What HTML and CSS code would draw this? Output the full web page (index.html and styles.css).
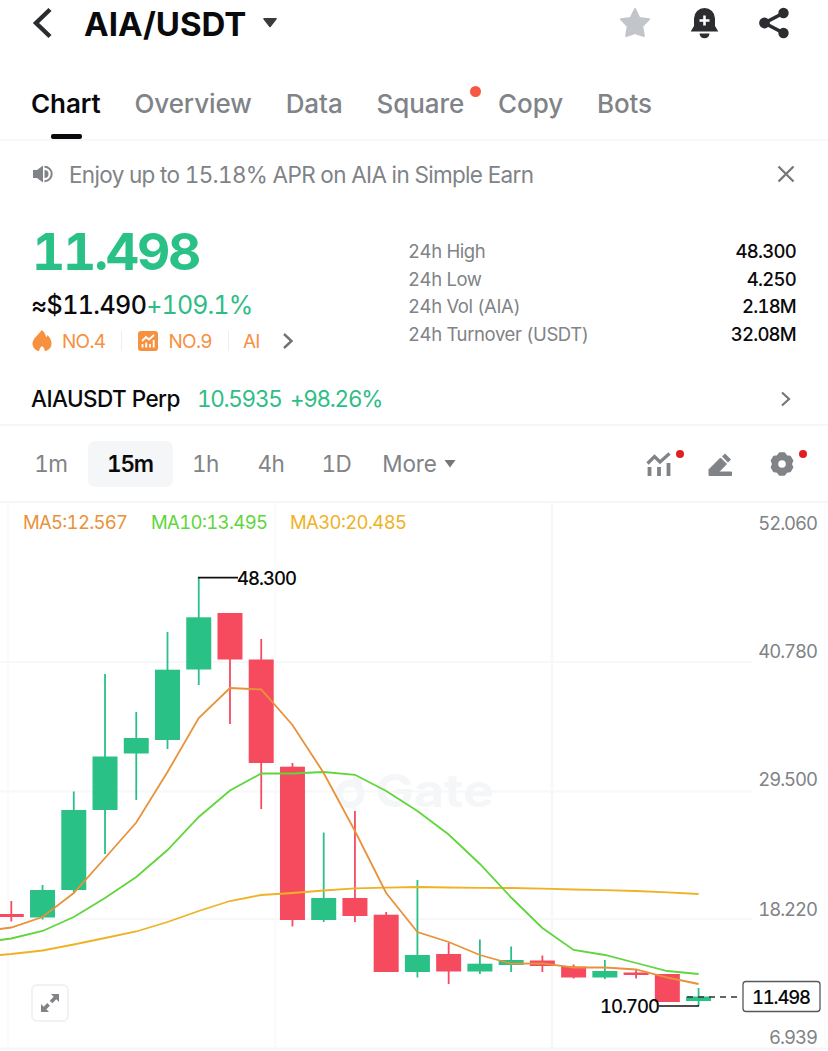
FILE: index.html
```
<!DOCTYPE html>
<html lang="en">
<head>
    <meta charset="UTF-8">
    <meta name="viewport" content="width=device-width, initial-scale=1.0">
    <title>AIA/USDT</title>
    <link rel="stylesheet" href="styles.css">
</head>
<body>
    <header class="topbar">
        <svg class="back" width="22" height="32" viewBox="0 0 22 32"><path d="M20 2.500 6 16l14 13.500" fill="none" stroke="#2b2c30" stroke-width="4.400"/></svg>
        <h1 class="pair"><span>AIA/USDT</span></h1>
        <svg class="pair-arrow" width="16" height="12" viewBox="0 0 16 12"><path d="M2 1.800h12L8 9.400z" fill="#3a3b3e" stroke="#3a3b3e" stroke-width="1.600" stroke-linejoin="round"/></svg>
        <div class="actions">
            <svg width="34" height="34" viewBox="0 0 34 34"><path d="m18 3 4.300 9 9.700 1.200-6.800 7 1.700 9.800-8.900-3-8.900 3 1.700-9.800-6.800-7L13.700 12z" fill="#c2c5c9" stroke="#c2c5c9" stroke-width="2" stroke-linejoin="round"/></svg>
            <svg width="34" height="34" viewBox="0 0 34 34"><path d="M7 20V12.500a10.500 10.500 0 0 1 21 0V20l3.300 5.500H3.700z" fill="#2b2d31"/><path d="M12.500 27.500h10a5 4.800 0 0 1-10 0z" fill="#2b2d31"/><path d="M17.500 9.500v10M12.500 14.500h10" stroke="#fff" stroke-width="2.600"/></svg>
            <svg width="34" height="34" viewBox="0 0 34 34"><path d="M26.500 7 7.500 17l19 10" fill="none" stroke="#2b2d31" stroke-width="3.600"/><circle cx="26.500" cy="7" r="5.200" fill="#2b2d31"/><circle cx="7.500" cy="17" r="5.400" fill="#2b2d31"/><circle cx="26.500" cy="27" r="5.200" fill="#2b2d31"/></svg>
        </div>
    </header>

    <nav class="tabs">
        <a class="tab active">Chart</a>
        <a class="tab">Overview</a>
        <a class="tab">Data</a>
        <a class="tab dot">Square</a>
        <a class="tab">Copy</a>
        <a class="tab">Bots</a>
    </nav>

    <div class="notice">
        <svg width="22" height="20" viewBox="0 0 22 20"><path d="M1 6h4l6-4.500v17L5 14H1z" fill="#808387"/><path d="M12.500 6a4 4 0 0 1 0 8z" fill="#808387"/><path d="M12.500 2.800a7.200 7.200 0 0 1 0 14.400" fill="none" stroke="#808387" stroke-width="2"/></svg>
        <span class="notice-text">Enjoy up to 15.18% APR on AIA in Simple Earn</span>
        <svg class="close" width="18" height="18" viewBox="0 0 18 18"><path d="m1.500 1.500 15 15M16.500 1.500l-15 15" stroke="#75787b" stroke-width="2.300"/></svg>
    </div>

    <section class="quote">
        <div class="quote-left">
            <div class="price">11.498</div>
            <div class="fiat"><span class="usd">≈$11.490</span><span class="up">+109.1%</span></div>
            <div class="ranks">
                <svg width="22" height="24" viewBox="0 0 22 24"><path d="M10.500 1C9 5 1.500 9 1.500 14.500c0 3.500 2 6.500 6.700 7.800 0-2 .8-3.800 2.800-5.300 2 1.500 2.800 3.300 2.800 5.300 4.700-1.300 6.700-4.300 6.700-7.800 0-3-1.500-6-4-8.500-.2 1-.6 1.800-1.300 2.300C14.500 5 13 2.500 10.500 1z" fill="#f7903f"/></svg>
                <span class="rank">NO.4</span>
                <i></i>
                <svg width="22" height="22" viewBox="0 0 22 22"><rect x="1" y="1" width="20" height="20" rx="3" fill="#f7903f"/><path d="m5 11 4-4 3 2.500L17 5M5.500 17.500V14M9.200 17.500v-5M13 17.500V14M16.700 17.500V10" fill="none" stroke="#fff" stroke-width="1.900"/></svg>
                <span class="rank">NO.9</span>
                <i></i>
                <span class="rank rank-ai">AI</span>
                <svg class="more-ranks" width="14" height="18" viewBox="0 0 14 18"><path d="m3 2 7.500 7L3 16" fill="none" stroke="#6f7276" stroke-width="2.400"/></svg>
            </div>
        </div>
        <dl class="stats">
            <div><dt>24h High</dt><dd>48.300</dd></div>
            <div><dt>24h Low</dt><dd>4.250</dd></div>
            <div><dt>24h Vol (AIA)</dt><dd>2.18M</dd></div>
            <div><dt>24h Turnover (USDT)</dt><dd>32.08M</dd></div>
        </dl>
    </section>

    <div class="perp">
        <span class="perp-name">AIAUSDT Perp</span>
        <span class="perp-price">10.5935</span>
        <span class="perp-change">+98.26%</span>
        <svg width="12" height="18" viewBox="0 0 12 18"><path d="m2 2.500 7 6.500-7 6.500" fill="none" stroke="#75787b" stroke-width="2.200"/></svg>
    </div>

    <div class="intervals">
        <div class="interval-list">
            <button>1m</button>
            <button class="selected">15m</button>
            <button>1h</button>
            <button>4h</button>
            <button>1D</button>
            <button class="more">More<svg width="12" height="9" viewBox="0 0 12 9"><path d="M.5 1h11L6 8.500z" fill="#75787b"/></svg></button>
        </div>
        <div class="tools">
            <span class="tool badge"><svg width="28" height="28" viewBox="0 0 28 28"><path d="m1.500 13.500 7-7 5.500 5.500L23.500 3.500" fill="none" stroke="#808387" stroke-width="3.200"/><path d="M3.500 17v9M13 17v9M22.500 13v13" stroke="#808387" stroke-width="3.800"/></svg></span>
            <span class="tool"><svg width="28" height="28" viewBox="0 0 28 28"><path d="M2 25.500v-6L13.500 8l6 6-7.800 8H24.500v3.500z" fill="#808387" stroke="#808387" stroke-linejoin="round"/><path d="m15 6.500 3-3 6 6-3 3z" fill="#808387"/></svg></span>
            <span class="tool badge gear"><svg width="28" height="28" viewBox="0 0 28 28"><path d="M11.700 3h4.600l2.300 3 3.600.6 2.300 4-1.300 3.400 1.300 3.400-2.300 4-3.600.6-2.300 3h-4.600l-2.300-3-3.600-.6-2.300-4L4.800 14l-1.300-3.400 2.300-4L9.400 6z" fill="#808387" stroke="#808387" stroke-width="1.600" stroke-linejoin="round"/><circle cx="14" cy="14" r="3.800" fill="#fff"/></svg></span>
        </div>
    </div>

    <main class="chart">
        <svg id="kline" width="828" height="549" viewBox="0 502 828 549"></svg>
        <button class="expand" aria-label="Fullscreen"><svg width="20" height="20" viewBox="0 0 20 20"><path d="M11 1h8v8l-2.700-2.700-4 4-2.600-2.600 4-4zM1 11l2.700 2.700 3.600-3.600 2.600 2.600-3.600 3.600L9 19H1z" fill="#808387"/></svg></button>
    </main>

    <script src="chart.js"></script>
</body>
</html>
```
FILE: styles.css
```
* {
    margin: 0;
    padding: 0;
    box-sizing: border-box;
}

body {
    width: 828px;
    height: 1051px;
    overflow: hidden;
    background: #fff;
    color: #0a0a0c;
    font-family: Inter, "Liberation Sans", sans-serif;
    font-feature-settings: "tnum";
}

svg {
    display: block;
    flex: none;
}

button {
    border: none;
    background: none;
    font: inherit;
    font-feature-settings: inherit;
    letter-spacing: inherit;
    color: inherit;
}

.topbar {
    height: 46px;
    padding: 0 37px 0 30px;
    display: flex;
    align-items: center;
}

.pair {
    margin-left: 32px;
    padding-top: 1px;
    width: 162px;
    font-size: 33px;
    font-weight: 700;
    white-space: nowrap;
}

.pair-arrow {
    margin-left: 16px;
}

.actions {
    margin-left: auto;
    display: flex;
    gap: 36px;
}

.tabs {
    height: 95px;
    padding: 23px 31px 0;
    display: flex;
    gap: 34px;
    border-bottom: 2px solid #f7f8f9;
    font-size: 26px;
    font-weight: 500;
    letter-spacing: -0.1px;
    color: #808387;
}

.tab {
    position: relative;
    line-height: 70px;
    height: 70px;
}

.tab.active {
    color: #0a0a0c;
    font-weight: 600;
}

.tab.active::after {
    content: "";
    position: absolute;
    left: 50%;
    bottom: 0;
    width: 31px;
    height: 5px;
    margin-left: -15px;
    border-radius: 2px;
    background: #0a0a0c;
}

.tab.dot::after {
    content: "";
    position: absolute;
    right: -17px;
    top: 17px;
    width: 11px;
    height: 11px;
    border-radius: 50%;
    background: #f75844;
}

.notice {
    height: 66px;
    padding: 0 33px 0 32px;
    display: flex;
    align-items: center;
    color: #808387;
    font-size: 22.500px;
    letter-spacing: -0.67px;
}

.notice-text {
    margin-left: 15px;
}

.close {
    margin-left: auto;
}

.quote {
    height: 163px;
    padding: 18px 32px 0 31px;
    display: flex;
    justify-content: space-between;
}

.price {
    height: 54px;
    line-height: 52px;
    font-size: 51.500px;
    font-weight: 700;
    letter-spacing: -2.2px;
    color: #2ac187;
    padding-left: 1px;
}

.fiat {
    height: 52px;
    line-height: 52px;
    font-size: 25px;
    white-space: nowrap;
}

.usd {
    font-weight: 500;
    letter-spacing: -0.6px;
}

.up {
    color: #2ebd85;
    letter-spacing: -0.9px;
}

.ranks {
    height: 20px;
    display: flex;
    align-items: center;
    font-size: 19px;
    letter-spacing: -0.7px;
    color: #f7903f;
}

.ranks i {
    width: 1px;
    height: 20px;
    margin: 0 15px 0 16px;
    background: #edeef0;
}

.rank {
    margin-left: 9px;
}

.rank-ai {
    margin-left: -1px;
}

.more-ranks {
    margin-left: 21px;
}

.stats {
    width: 388px;
    padding-top: 13px;
    font-size: 18.500px;
}

.stats div {
    display: flex;
    justify-content: space-between;
    line-height: 27.600px;
}

.stats dt {
    color: #808387;
    letter-spacing: -0.38px;
}

.stats dd {
    font-weight: 500;
    letter-spacing: -0.75px;
}

.perp {
    height: 56px;
    padding: 3px 36px 0 31px;
    display: flex;
    align-items: center;
    border-bottom: 2px solid #f5f6f7;
    font-size: 22.500px;
    color: #2ebd85;
    letter-spacing: -1.3px;
}

.perp-name {
    width: 166px;
    font-weight: 500;
    color: #0a0a0c;
    letter-spacing: -0.55px;
}

.perp-price {
    width: 93px;
}

.perp svg {
    margin-left: auto;
}

.intervals {
    height: 77px;
    padding: 0 32px 0 18px;
    display: flex;
    align-items: center;
    justify-content: space-between;
    border-bottom: 2px solid #f5f6f7;
    font-size: 22.500px;
    letter-spacing: -0.6px;
    color: #808387;
}

.interval-list {
    display: flex;
    align-items: center;
}

.interval-list button {
    width: 65.500px;
    height: 46px;
}

.interval-list .selected {
    width: 85px;
    margin: 0 0 0 4px;
    border-radius: 7px;
    background: #f4f6f8;
    color: #0a0a0c;
    font-weight: 600;
    letter-spacing: -1.2px;
}

.interval-list .more {
    width: 100px;
    display: flex;
    align-items: center;
    justify-content: center;
    gap: 7px;
    letter-spacing: -0.1px;
}

.tools {
    display: flex;
    gap: 33px;
}

.tool {
    position: relative;
}

.badge::after {
    content: "";
    position: absolute;
    right: -10px;
    top: 0;
    width: 8px;
    height: 8px;
    border-radius: 50%;
    background: #e02020;
}

.badge.gear::after {
    right: -11px;
}

.chart {
    position: relative;
    margin-top: -1px;
}

.chart text {
    font-size: 18.500px;
}

.chart .watermark {
    font-size: 45px;
    font-weight: 700;
}

.expand {
    position: absolute;
    left: 31px;
    top: 482px;
    width: 38px;
    height: 38px;
    display: flex;
    align-items: center;
    justify-content: center;
    background: #fff;
    border: 2px solid #f2f2f3;
    border-radius: 6px;
}
```
FILE: chart.js
```
const svg = document.getElementById('kline');

const UP = '#2ac187';
const DOWN = '#f64b5f';
const FIRST_X = 11.3;
const STEP = 31.24;

// body top, body bottom, high, low, direction
const candles = [
    [914, 917, 901, 921.5, DOWN],
    [890, 917.5, 885, 919.5, UP],
    [810, 890, 791.5, 892, UP],
    [756.5, 810, 674, 854, UP],
    [738, 753.5, 712, 800, UP],
    [669.7, 740, 632, 749, UP],
    [617.3, 669.5, 577, 685, UP],
    [613, 659.5, 613, 724, DOWN],
    [659.5, 763, 639, 809, DOWN],
    [766.7, 920, 763, 926.5, DOWN],
    [898, 920, 832.5, 922, UP],
    [898, 916, 811, 922, DOWN],
    [914.7, 972, 912, 972, DOWN],
    [955, 972, 880, 977.5, UP],
    [954, 971.5, 943, 984, DOWN],
    [963.7, 971.5, 939.5, 974, UP],
    [960, 965, 946.5, 972, UP],
    [960.5, 966, 955.5, 972, DOWN],
    [966.5, 977.5, 964.5, 978.5, DOWN],
    [971, 977.5, 960, 979, UP],
    [972.5, 975, 970, 978.5, DOWN],
    [974, 1002, 974, 1002, DOWN],
    [996.5, 1001, 988, 1006, UP]
];

// first value sits on the left edge, the rest on the candle centres
const averages = [
    ['#e8923a', [929, 927.5, 917, 893, 858, 822.5, 772, 718, 688, 689.5, 725, 773, 831, 893, 932, 942, 955, 963.7, 963.3, 967.5, 967.5, 969.5, 977.5, 984]],
    ['#5fd63c', [940, 938.5, 931, 917, 898, 877, 850, 817, 790.5, 773.5, 773.5, 772, 774.8, 791, 811, 834.5, 864, 897.5, 928, 950, 955, 963, 971, 974]],
    ['#efb226', [955, 954, 950.5, 944.5, 938, 931.5, 922, 911, 901, 895, 893, 890.5, 888.3, 887.7, 887, 887.5, 887.8, 888, 888.7, 889.5, 890.2, 891, 892.3, 894]]
];

function add(name, attrs, text) {
    const el = document.createElementNS('http://www.w3.org/2000/svg', name);
    for (const key in attrs) el.setAttribute(key, attrs[key]);
    if (text) el.textContent = text;
    svg.appendChild(el);
    return el;
}

function line(x1, y1, x2, y2, stroke, width) {
    return add('line', { x1, y1, x2, y2, stroke, 'stroke-width': width });
}

[662, 791.5, 919].forEach(y => line(0, y, 752, y, '#f7f8f9', 2));
line(0, 1048.5, 828, 1048.5, '#f5f6f7', 2);
[8, 275.5, 825.5].forEach(x => line(x, 503, x, 1048, '#fafafb', 2));
line(552, 503, 552, 1048, '#f6f7f8', 2.5);

// watermark
add('circle', { cx: 350, cy: 794, r: 11, fill: 'none', stroke: '#f5f6f8', 'stroke-width': 7 });
add('rect', { x: 353, y: 777, width: 9, height: 9, fill: '#f5f6f8' });
add('text', { x: 375, y: 807, fill: '#f5f6f8', class: 'watermark', textLength: 119, lengthAdjust: 'spacingAndGlyphs' }, 'Gate');

candles.forEach(([top, bottom, high, low, color], i) => {
    const x = FIRST_X + i * STEP;
    line(x, high, x, low, color, 1.8);
    add('rect', { x: x - 12.5, y: top, width: 25, height: bottom - top, fill: color });
});

averages.slice().reverse().forEach(([color, ys]) => {
    const points = ys.map((y, i) => `${i === 0 ? 0 : FIRST_X + (i - 1) * STEP},${y}`).join(' ');
    add('polyline', { points, fill: 'none', stroke: color, 'stroke-width': 1.8 });
});

add('text', { x: 23, y: 529, fill: '#e8923a', textLength: 105 }, 'MA5:12.567');
add('text', { x: 151, y: 529, fill: '#5fd63c', textLength: 117 }, 'MA10:13.495');
add('text', { x: 290, y: 529, fill: '#efb226', textLength: 117 }, 'MA30:20.485');

[['52.060', 530], ['40.780', 658], ['29.500', 786], ['18.220', 916], ['6.939', 1044]].forEach(([label, y]) => {
    const width = label.length * 10.8 - 5;
    add('text', { x: 818 - width, y, fill: '#808387', textLength: width }, label);
});

line(198, 577.7, 238, 577.7, '#111', 1.7);
add('text', { x: 237, y: 585, fill: '#0a0a0c', textLength: 60, 'font-weight': 500 }, '48.300');
line(659, 1006, 699, 1006, '#111', 1.7);
add('text', { x: 600, y: 1013, fill: '#0a0a0c', textLength: 60, 'font-weight': 500 }, '10.700');

// last price
line(687, 997, 742, 997, '#333', 1.4).setAttribute('stroke-dasharray', '6 5');
add('rect', { x: 743, y: 981.5, width: 77, height: 30, rx: 3, fill: '#fff', stroke: '#55585c', 'stroke-width': 1.3 });
add('text', { x: 752, y: 1004, fill: '#0a0a0c', textLength: 59, 'font-weight': 500 }, '11.498');
```
